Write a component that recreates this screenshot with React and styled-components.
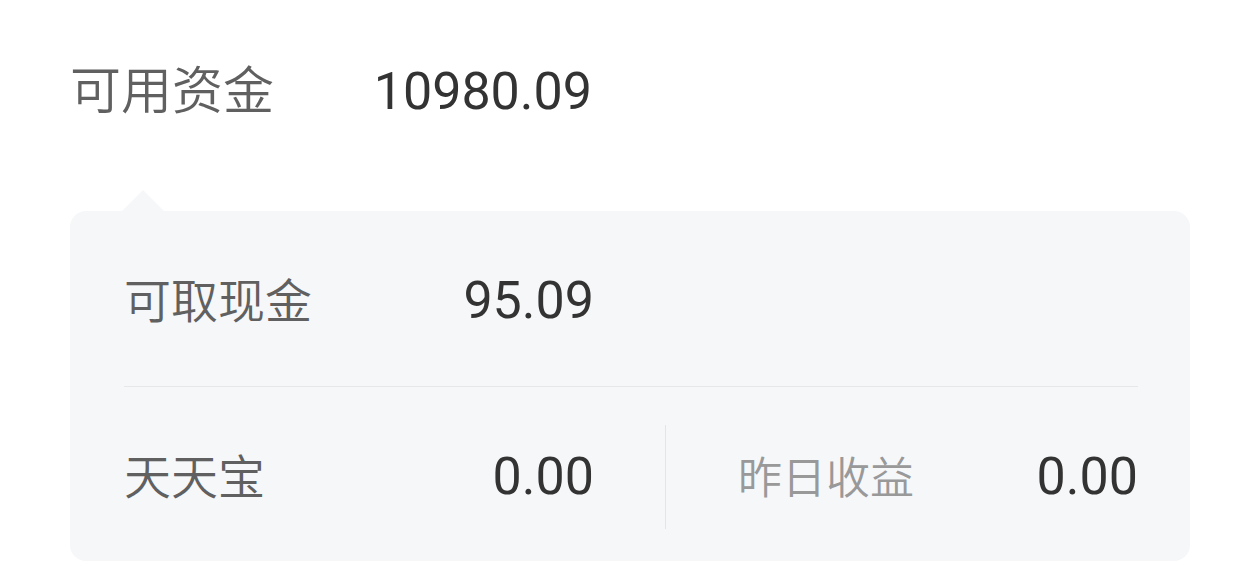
import React from "react";
import styled, { createGlobalStyle } from "styled-components";

const GlobalStyle = createGlobalStyle`
  html, body {
    margin: 0;
    padding: 0;
    background: #ffffff;
  }
  body {
    font-family: Roboto, "Noto Sans CJK SC", sans-serif;
  }
`;

export default () => (
  <>
    <GlobalStyle />
    <Page>
      <Pair width={522} height={178} pad={5}>
        <Label size={51} lift={9}>可用资金</Label>
        <Value>10980.09</Value>
      </Pair>

      <Card>
        <CardRow height={175} pad={4}>
          <Pair width={470}>
            <Label>可取现金</Label>
            <Value>95.09</Value>
          </Pair>
        </CardRow>

        <Divider />

        <CardRow height={174} pad={6}>
          <Pair width={470}>
            <Label>天天宝</Label>
            <Value>0.00</Value>
          </Pair>
          <Separator />
          <Pair grow>
            <Label muted size={44} lift={4}>昨日收益</Label>
            <Value>0.00</Value>
          </Pair>
        </CardRow>
      </Card>
    </Page>
  </>
);

const Page = styled.div`
  width: 1260px;
  height: 576px;
  box-sizing: border-box;
  padding: 0 70px;
  display: flex;
  flex-direction: column;
`;

const Pair = styled.div`
  display: flex;
  align-items: center;
  justify-content: space-between;
  box-sizing: border-box;
  width: ${(p) => (p.width ? `${p.width}px` : "auto")};
  height: ${(p) => (p.height ? `${p.height}px` : "auto")};
  padding-top: ${(p) => p.pad || 0}px;
  flex: ${(p) => (p.grow ? 1 : "none")};
`;

const Label = styled.span`
  font-family: "Noto Sans CJK SC", sans-serif;
  font-size: ${(p) => p.size || 47}px;
  font-weight: 350;
  line-height: 1;
  margin-bottom: ${(p) => (p.lift == null ? 7 : p.lift)}px;
  color: ${(p) => (p.muted ? "#999999" : "#606060")};
`;

const Value = styled.span`
  font-family: Roboto, "Noto Sans CJK SC", sans-serif;
  font-size: 52px;
  font-weight: 400;
  line-height: 1;
  color: #333333;
`;

/* bubble under the total, with the little pointer over 可取现金 */
const Card = styled.div`
  position: relative;
  margin-top: 33px;
  background: #f6f7f9;
  border-radius: 16px;
  padding: 0 52px 0 54px;
  display: flex;
  flex-direction: column;

  &::before {
    content: "";
    position: absolute;
    top: -21px;
    left: 52px;
    width: 0;
    height: 0;
    border-left: 21px solid transparent;
    border-right: 21px solid transparent;
    border-bottom: 21px solid #f6f7f9;
  }
`;

const CardRow = styled.div`
  display: flex;
  align-items: center;
  height: ${(p) => p.height}px;
  padding-top: ${(p) => p.pad || 0}px;
  box-sizing: border-box;
`;

const Divider = styled.div`
  height: 1px;
  background: #e6e7ea;
`;

const Separator = styled.div`
  width: 1px;
  height: 104px;
  margin: 0 72px 0 71px;
  background: #e4e5e8;
`;
